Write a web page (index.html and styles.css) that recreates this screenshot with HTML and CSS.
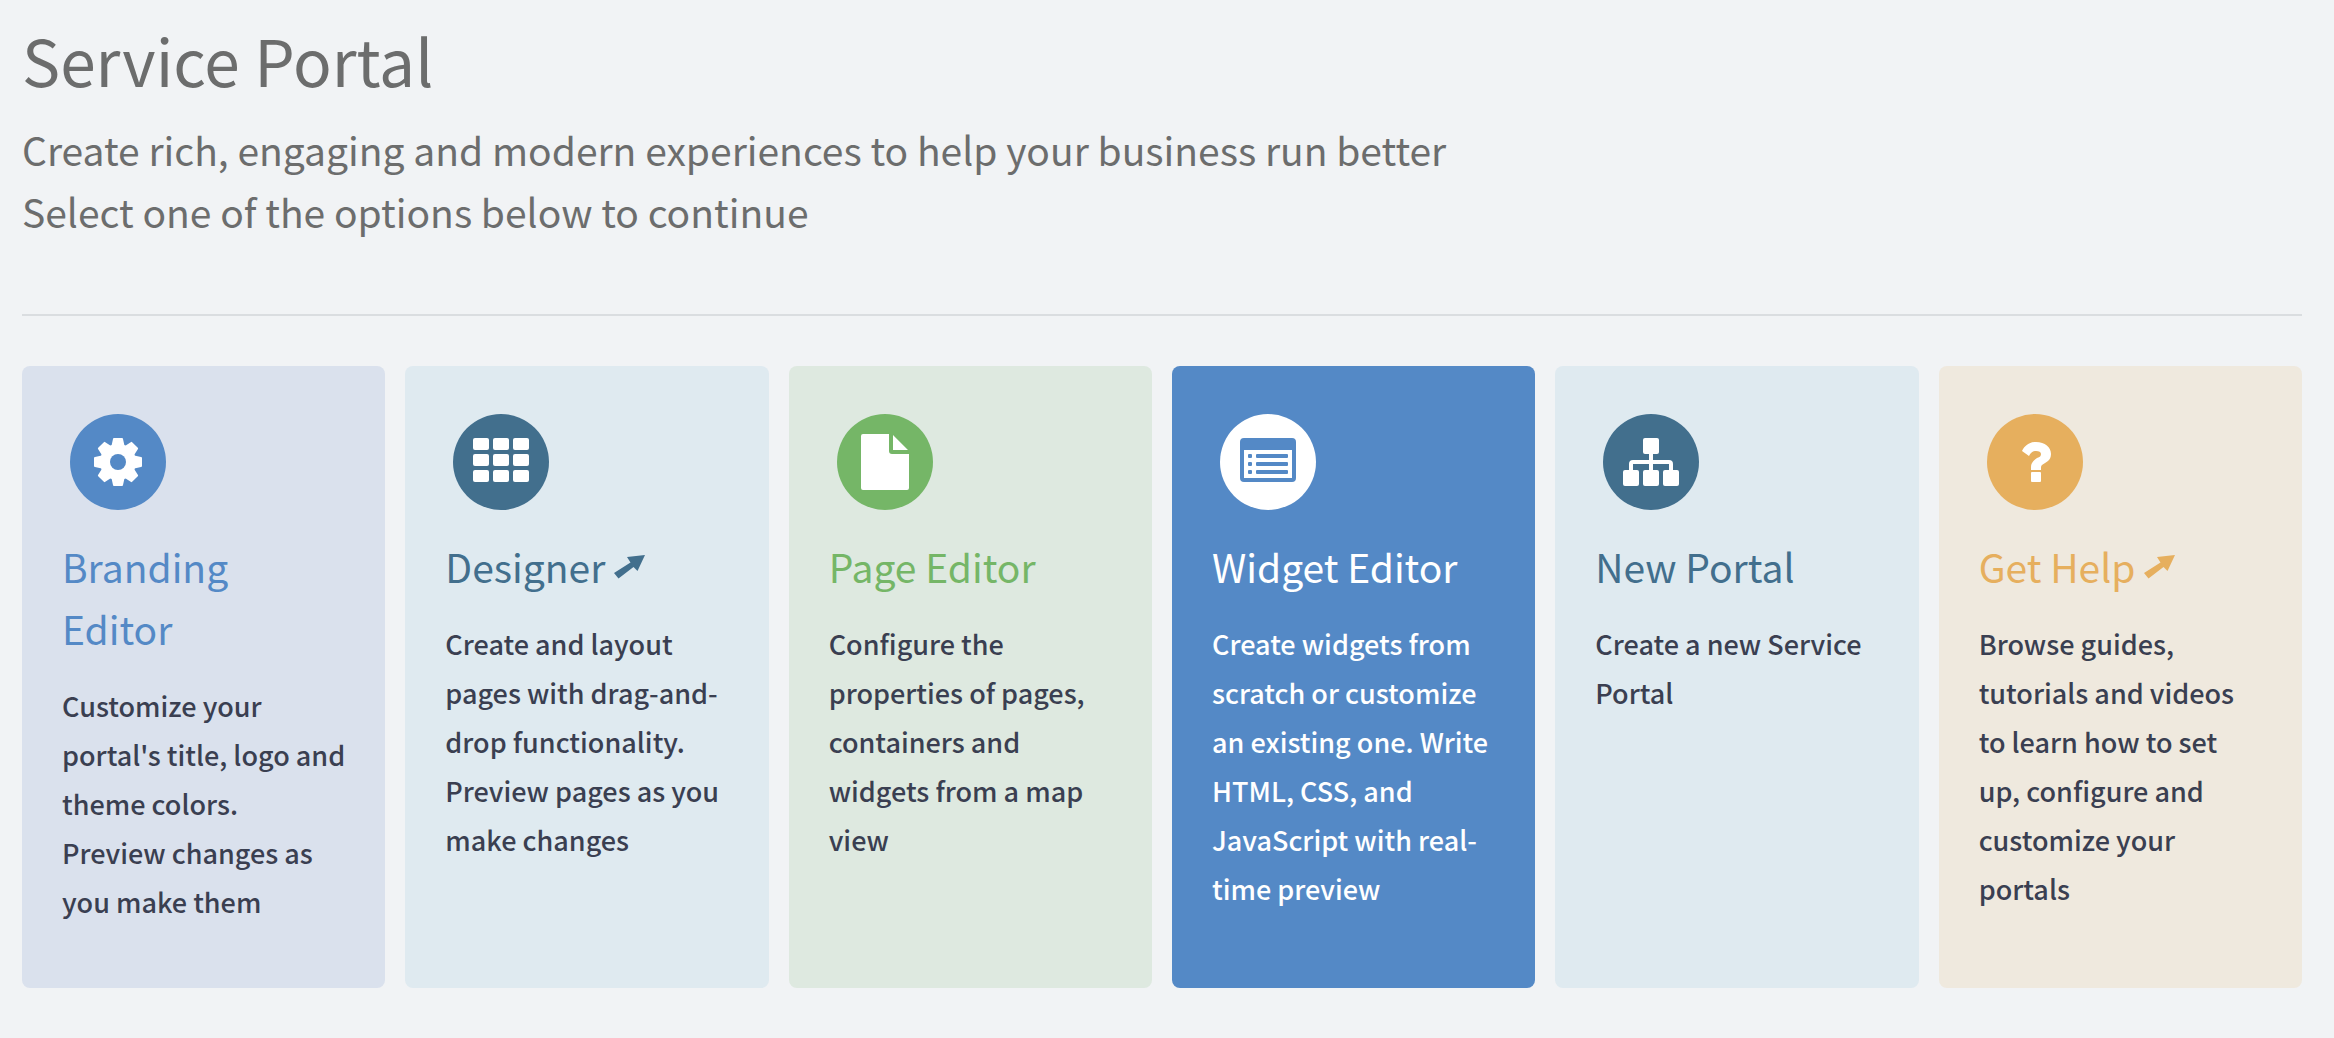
FILE: index.html
```html
<!DOCTYPE html>
<html lang="en">
<head>
<meta charset="utf-8">
<title>Service Portal</title>
<link rel="stylesheet" href="styles.css">
</head>
<body>
<main class="portal">
  <header class="intro">
    <h1 class="title">Service Portal</h1>
    <p class="subtitle">Create rich, engaging and modern experiences to help your business run better</p>
    <p class="subtitle">Select one of the options below to continue</p>
  </header>
  <nav class="cards" aria-label="Service Portal options">
    <a class="card branding" href="#branding">
      <svg class="icon" viewBox="0 0 96 96" aria-hidden="true">
        <circle class="disc" cx="48" cy="48" r="48"/>
        <g class="glyph">
          <circle cx="48" cy="48" r="18"/>
          <path id="tooth" d="M44 24h8a1 1 0 0 1 1 1l2 9H41l2-9a1 1 0 0 1 1-1z"/>
          <use href="#tooth" transform="rotate(45 48 48)"/>
          <use href="#tooth" transform="rotate(90 48 48)"/>
          <use href="#tooth" transform="rotate(135 48 48)"/>
          <use href="#tooth" transform="rotate(180 48 48)"/>
          <use href="#tooth" transform="rotate(225 48 48)"/>
          <use href="#tooth" transform="rotate(270 48 48)"/>
          <use href="#tooth" transform="rotate(315 48 48)"/>
        </g>
        <circle class="disc" cx="48" cy="48" r="8"/>
      </svg>
      <h2 class="name">Branding Editor</h2>
      <p class="text">Customize your portal's title, logo and theme colors. Preview changes as you make them</p>
    </a>
    <a class="card designer" href="#designer">
      <svg class="icon" viewBox="0 0 96 96" aria-hidden="true">
        <circle class="disc" cx="48" cy="48" r="48"/>
        <g class="glyph">
          <rect x="20" y="24" width="16" height="12" rx="2"/><rect x="40" y="24" width="16" height="12" rx="2"/><rect x="60" y="24" width="16" height="12" rx="2"/>
          <rect x="20" y="40" width="16" height="12" rx="2"/><rect x="40" y="40" width="16" height="12" rx="2"/><rect x="60" y="40" width="16" height="12" rx="2"/>
          <rect x="20" y="56" width="16" height="12" rx="2"/><rect x="40" y="56" width="16" height="12" rx="2"/><rect x="60" y="56" width="16" height="12" rx="2"/>
        </g>
      </svg>
      <h2 class="name">Designer <svg class="arrow" viewBox="0 0 32 24" aria-hidden="true"><path d="M0 18 16.500 7.500 13 2 31 0 23.500 16 19.500 12 4.500 23.500z"/></svg></h2>
      <p class="text">Create and layout pages with drag-and-drop functionality. Preview pages as you make changes</p>
    </a>
    <a class="card page" href="#page">
      <svg class="icon" viewBox="0 0 96 96" aria-hidden="true">
        <circle class="disc" cx="48" cy="48" r="48"/>
        <path class="glyph" d="M26 20H52V37a3 3 0 0 0 3 3H72V74a2 2 0 0 1-2 2H26a2 2 0 0 1-2-2V22a2 2 0 0 1 2-2zM56 21 71 36H56z"/>
      </svg>
      <h2 class="name">Page Editor</h2>
      <p class="text">Configure the properties of pages, containers and widgets from a map view</p>
    </a>
    <a class="card widget" href="#widget">
      <svg class="icon" viewBox="0 0 96 96" aria-hidden="true">
        <circle class="disc" cx="48" cy="48" r="48"/>
        <path class="glyph" fill-rule="evenodd" d="M24 24H72a4 4 0 0 1 4 4V64a4 4 0 0 1-4 4H24a4 4 0 0 1-4-4V28a4 4 0 0 1 4-4zM24 36V64H72V36z"/>
        <g class="glyph">
          <rect x="28" y="40" width="4" height="4" rx="1"/><rect x="36" y="40" width="32" height="4" rx="1"/>
          <rect x="28" y="48" width="4" height="4" rx="1"/><rect x="36" y="48" width="32" height="4" rx="1"/>
          <rect x="28" y="56" width="4" height="4" rx="1"/><rect x="36" y="56" width="32" height="4" rx="1"/>
        </g>
      </svg>
      <h2 class="name">Widget Editor</h2>
      <p class="text">Create widgets from scratch or customize an existing one. Write HTML, CSS, and JavaScript with real-time preview</p>
    </a>
    <a class="card designer" href="#new">
      <svg class="icon" viewBox="0 0 96 96" aria-hidden="true">
        <circle class="disc" cx="48" cy="48" r="48"/>
        <g class="glyph">
          <rect x="40" y="24" width="16" height="16" rx="2"/>
          <rect x="20" y="56" width="16" height="16" rx="2"/><rect x="40" y="56" width="16" height="16" rx="2"/><rect x="60" y="56" width="16" height="16" rx="2"/>
          <path d="M46 40h4v6h16a4 4 0 0 1 4 4v6h-4v-6H50v6h-4v-6H30v6h-4v-6a4 4 0 0 1 4-4h16z"/>
        </g>
      </svg>
      <h2 class="name">New Portal</h2>
      <p class="text">Create a new Service Portal</p>
    </a>
    <a class="card help" href="#help">
      <svg class="icon" viewBox="0 0 96 96" aria-hidden="true">
        <circle class="disc" cx="48" cy="48" r="48"/>
        <path class="glyph" d="M35 37C38 31 43 28 49 28C58 28 64 33 64 40C64 47 59 48 55 51C54 52 54 53 54 54V56H44V53C44 49 46 47 50 44C53 43 54 42 54 40C54 38 52 37 49 37C46 37 44 38 42 42zM45 58h8a1 1 0 0 1 1 1v8a1 1 0 0 1-1 1h-8a1 1 0 0 1-1-1v-8a1 1 0 0 1 1-1z"/>
      </svg>
      <h2 class="name">Get Help <svg class="arrow" viewBox="0 0 32 24" aria-hidden="true"><path d="M0 18 16.500 7.500 13 2 31 0 23.500 16 19.500 12 4.500 23.500z"/></svg></h2>
      <p class="text">Browse guides, tutorials and videos to learn how to set up, configure and customize your portals</p>
    </a>
  </nav>
</main>
</body>
</html>
```
FILE: styles.css
```css
* {
  box-sizing: border-box;
}

body {
  margin: 0;
  background: #f1f3f5;
  color: #3a3f51;
  font-family: "Noto Sans CJK SC", "Open Sans", sans-serif;
}

.portal {
  padding: 14px 32px 50px 22px;
}

.intro {
  padding-bottom: 72px;
  border-bottom: 2px solid #dadde0;
  color: #6c6d6d;
}

.title {
  margin: 0 0 14px;
  font-size: 64px;
  font-weight: 400;
  line-height: 90px;
}

.subtitle {
  margin: 0;
  font-size: 39px;
  line-height: 62px;
}

.cards {
  display: grid;
  grid-template-columns: repeat(6, minmax(0, 1fr));
  gap: 20px;
  margin-top: 50px;
}

.card {
  padding: 48px 40px 62px;
  border-radius: 8px;
  color: inherit;
  text-decoration: none;
}

.icon {
  display: block;
  width: 96px;
  height: 96px;
  margin: 0 0 25px 8px;
}

.disc {
  fill: var(--accent);
}

.glyph {
  fill: #fff;
}

.name {
  margin: 0 0 22px;
  color: var(--accent);
  font-size: 39px;
  font-weight: 400;
  line-height: 62px;
}

.arrow {
  width: 32px;
  height: 24px;
  vertical-align: 4px;
  fill: currentColor;
}

.text {
  margin: 0;
  font-size: 27px;
  font-weight: 500;
  line-height: 49px;
}

.branding {
  --accent: #5489c6;
  background: #dae1ed;
}

.designer {
  --accent: #426f8d;
  background: #dfeaf0;
}

.page {
  --accent: #75b667;
  background: #dee9e0;
}

.widget {
  --accent: #fff;
  background: #5489c6;
  color: #fff;
}

.widget .glyph {
  fill: #5489c6;
}

.help {
  --accent: #e6af5e;
  background: #efe9de;
}
```
